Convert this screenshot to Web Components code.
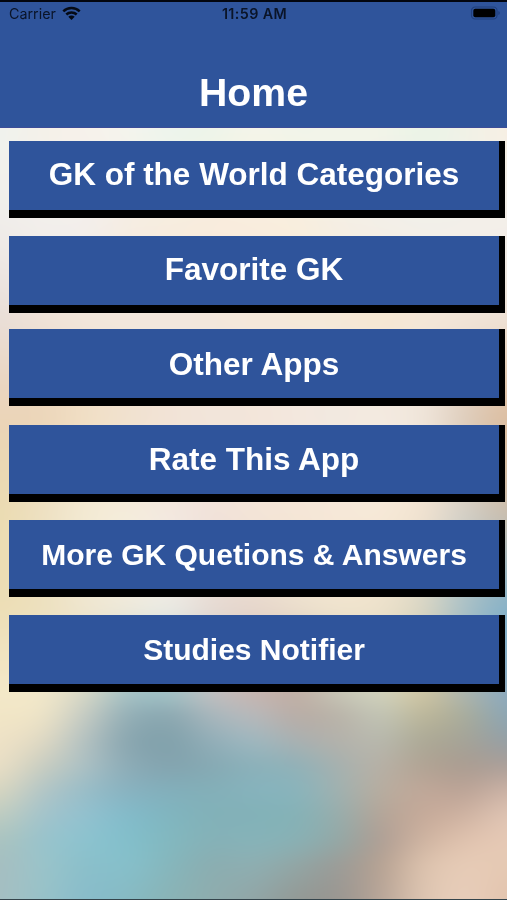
<!DOCTYPE html>
<html lang="en">
<head>
<meta charset="utf-8">
<meta name="viewport" content="width=device-width, initial-scale=1">
<title>Home</title>
<style>
  html, body { margin: 0; height: 100%; overflow: hidden; }
</style>
</head>
<body>

<home-screen>
  <status-bar slot="header" carrier="Carrier" time="11:59 AM"></status-bar>
  <title-bar slot="header">Home</title-bar>
  <menu-button style="--line: 67px">GK of the World Categories</menu-button>
  <menu-button style="--line: 67px">Favorite GK</menu-button>
  <menu-button style="--gap: 16px; --line: 71px">Other Apps</menu-button>
  <menu-button style="--gap: 19px">Rate This App</menu-button>
  <menu-button style="--size: 30px">More GK Quetions &amp; Answers</menu-button>
  <menu-button style="--size: 30px">Studies Notifier</menu-button>
</home-screen>

<script>
function html(a, ...b) { return a.map((s, i) => s + (b[i] ?? '')).join('') }

function makeTemplate(markup) {
  const template = document.createElement('template');
  template.innerHTML = markup;
  return template;
}

// backdrop colours: [y, colours evenly spaced from left to right]
const MESH = [
  [0,   'edf5ee f0f3e8 f5f5ee f4f5ee e8f5ee e9f5ea f0f5ea f0f5ea f2f5ea f2f4e8 e9f4e6 f0f2e6 f8efe3'],
  [134, 'f0f3ee f5f0e8 f8f1ea f4f5ee ecf5ee ecf5ea f5f5ea f0f5ea f2f5ea f2f4e8 e9f4e6 f0f2e6 f8efe3'],
  [226, 'f0edea f2f0ee f2efed f6ece1 f9ecdc fbebdb fbecdc faeedc f5eee4 f3efea f3f0ec f3f0ec f3f0ec'],
  [320, 'e8ddd8 f0e2d8 f2e6dc f3e8de f2e7df f2e7dc f5e8da f5e8d8 f6e8d5 f7e6cd f5e6d5 f3e5d8 efe3d8'],
  [415, 'ebd3b6 ebd2b4 f0dcbf f0dfcb f2e2d4 f2e5da f2e5da f2e8e0 f1e9e3 f2ebe4 efe6dd dccab8 dcb998'],
  [511, 'ebdcb0 eee2c4 f4ecd6 f5eedd f3e8e0 f2e2da f5e6d8 f6e6d6 f7e8d8 f8ead8 f5e4d0 d8d2c8 d0beaa'],
  [606, 'ecddb4 ecdfbc f0e6cf f4ecdc f2efe8 e8dcd4 e8d8cd eee3d0 f3e6cf efe2cb d8d6c5 a3bfc8 7db0cb'],
  [670, 'f3e6c4 f2e8ca e2dec8 b3ccca a4c6cb c4c4c4 ccb9b3 c6ada4 cccab8 d8d8c0 d4caa8 a8b8b8 84aac4'],
  [694, 'f3e8c8 f2e8ca d5d6c5 a3c0c4 9fc1c5 c0bfc0 c6b5b0 bfaea4 c5c4b5 d0d2bd cfc4a0 acb4ac 8ba9be'],
  [715, 'f2e6c6 eee4c7 c5cbc3 92aeb6 8aa7b0 a8b7bd b8b9bb b9aca5 b9b3a8 c2c5b6 bdb799 a9ac9b 8ba6b5'],
  [740, 'efe2c6 e0d9c3 b3c1c1 88a5af 80a0aa 92aeb8 9fb8c0 a9b0b1 b4b1aa b8b9ae aca995 a5a397 949fa6'],
  [765, 'eadfc5 c9cdc0 abc0c4 8cabb6 83a3ae 86a9b3 8bb1ba 90b1b8 a6b1af b8b1a6 b1a393 aa9c91 ab9f99'],
  [790, 'd8d6c0 b2c5c6 98bdc8 88b2c0 82afbb 83afb8 86b3bd 88b4bc a0b1b0 b8ad9f c0a798 bba396 ccb3a6'],
  [815, 'bfccc0 a2c3cb 92c1cf 82bbca 80b5bf 82b1b8 82b1b7 84b2b7 97adac b4a497 c6aa99 cfb3a2 e0c5b4'],
  [840, 'aac3bf 98c3cc 8cc3cf 82bfcb 82b8bf 85b1b7 86b3b9 88b1b5 93a8a6 ae9d93 cfb4a1 e0c3af e6c9b5'],
  [865, 'a6bec0 9ac4ca 8abfca 86c0cb 85b6bc 8badb0 8eafb2 92a6a5 9b9b97 b6a191 ddc3ae e7ccb7 e5c9b3'],
  [900, 'a5bfc2 98c2c8 88bccb 86bac3 8ab3b5 8fadae 92a5a6 939894 999590 b8a598 dec6b2 e8cebb e2c3ad'],
].map(([y, row]) => [y, row.split(' ').map(c => [0, 2, 4].map(i => parseInt(c.slice(i, i + 2), 16)))]);

const clamp = (n, max) => Math.max(0, Math.min(max, n));

// cubic weights for four neighbours, part b-spline and part catmull-rom
function weights(t) {
  const t2 = t * t, t3 = t2 * t;
  const spline = [(1 - t) ** 3 / 6, (3 * t3 - 6 * t2 + 4) / 6, (-3 * t3 + 3 * t2 + 3 * t + 1) / 6, t3 / 6];
  const catmull = [(-t3 + 2 * t2 - t) / 2, (3 * t3 - 5 * t2 + 2) / 2, (-3 * t3 + 4 * t2 + t) / 2, (t3 - t2) / 2];
  return spline.map((s, i) => s * 0.65 + catmull[i] * 0.35);
}

const backdropTemplate = makeTemplate(html`
  <style>
  :host { display: block; overflow: hidden; }
  canvas { display: block; width: 100%; height: 100%; }
  </style>
  <canvas width="507" height="900"></canvas>
`);

class SoftBackdrop extends HTMLElement {
  constructor() {
    super();
    const shadow = this.attachShadow({ mode: "open" });
    shadow.appendChild(backdropTemplate.content.cloneNode(true));
    this.paint(shadow.querySelector('canvas'));
  }

  paint(canvas) {
    const { width, height } = canvas;
    const ctx = canvas.getContext('2d');
    const image = ctx.createImageData(width, height);
    const lastRow = MESH.length - 1;
    const lastCol = MESH[0][1].length - 1;
    let r = 0;
    for (let y = 0; y < height; y++) {
      while (r < lastRow - 1 && y >= MESH[r + 1][0]) r++;
      const v = weights((y - MESH[r][0]) / (MESH[r + 1][0] - MESH[r][0]));
      const rows = [-1, 0, 1, 2].map(d => MESH[clamp(r + d, lastRow)][1]);
      // blend the rows first, then walk along the result
      const line = rows[0].map((_, c) => [0, 1, 2].map(k => rows.reduce((sum, row, i) => sum + row[c][k] * v[i], 0)));
      for (let x = 0; x < width; x++) {
        const pos = x / width * lastCol;
        const c = Math.floor(pos);
        const u = weights(pos - c);
        const at = (y * width + x) * 4;
        for (let k = 0; k < 3; k++) {
          let sum = 0;
          for (let i = 0; i < 4; i++) sum += line[clamp(c + i - 1, lastCol)][k] * u[i];
          image.data[at + k] = sum;
        }
        image.data[at + 3] = 255;
      }
    }
    ctx.putImageData(image, 0, 0);
  }
}
customElements.define("soft-backdrop", SoftBackdrop);

const screenTemplate = makeTemplate(html`
  <style>
  :host {
    display: grid;
    width: 507px;
    height: 900px;
    box-sizing: border-box;
    overflow: hidden;
    font-family: "Liberation Sans", Arial, sans-serif;
  }
  soft-backdrop, .page { grid-area: 1 / 1; min-height: 0; }
  .page { display: flex; flex-direction: column; z-index: 1; border-bottom: 1px solid #34444b; }
  header {
    height: 128px;
    box-sizing: border-box;
    border-top: 2px solid #03060f;
    border-bottom: 1px solid #3d4d98;
    background: #2f549b;
  }
  nav { display: flex; flex-direction: column; padding: 13px 2px 0 9px; }
  </style>
  <soft-backdrop></soft-backdrop>
  <div class="page">
    <header><slot name="header"></slot></header>
    <nav><slot></slot></nav>
  </div>
`);

class HomeScreen extends HTMLElement {
  constructor() {
    super();
    const shadow = this.attachShadow({ mode: "open" });
    shadow.appendChild(screenTemplate.content.cloneNode(true));
  }
}
customElements.define("home-screen", HomeScreen);

const statusTemplate = makeTemplate(html`
  <style>
  :host {
    display: grid;
    grid-template-columns: 1fr auto 1fr;
    align-items: center;
    height: 24px;
    padding: 0 7px 0 9px;
    font: 14.3px/24px Inter, "Liberation Sans", sans-serif;
    color: #0a1428;
  }
  .left { display: flex; align-items: center; gap: 6px; }
  .time { font-weight: 600; letter-spacing: 0.4px; }
  .battery { justify-self: end; }
  svg { display: block; position: relative; top: -1px; }
  </style>
  <div class="left">
    <span class="carrier"></span>
    <svg width="19" height="15" viewBox="0 0 19 15">
      <g fill="none" stroke="#050a14" stroke-width="2.5">
        <path d="M1.3 5.3C5.8 .9 13.2 .9 17.7 5.3"/>
        <path d="M4.3 8.5C7.2 5.7 11.8 5.7 14.7 8.5"/>
      </g>
      <path d="M6.3 10.7C8.1 9 10.9 9 12.7 10.7L9.5 14z" fill="#050a14"/>
    </svg>
  </div>
  <span class="time"></span>
  <svg class="battery" width="30" height="14" viewBox="0 0 30 14">
    <rect x="1.5" y="1" width="25.5" height="12" rx="3.6" fill="none" stroke="#203f7c" stroke-width="1.2"/>
    <rect x="3.3" y="2.7" width="22" height="8.6" rx="2" fill="#000"/>
    <path d="M28.4 5v4q1.4-.5 1.4-2t-1.4-2z" fill="#203f7c"/>
  </svg>
`);

class StatusBar extends HTMLElement {
  constructor() {
    super();
    const shadow = this.attachShadow({ mode: "open" });
    shadow.appendChild(statusTemplate.content.cloneNode(true));
  }

  connectedCallback() {
    this.shadowRoot.querySelector('.carrier').textContent = this.getAttribute('carrier');
    this.shadowRoot.querySelector('.time').textContent = this.getAttribute('time');
  }
}
customElements.define("status-bar", StatusBar);

const titleTemplate = makeTemplate(html`
  <style>
  :host { display: block; padding-top: 44px; text-align: center; color: #fff; }
  h1 { margin: 0; font-size: 39.2px; line-height: 46px; font-weight: bold; }
  </style>
  <h1><slot></slot></h1>
`);

class TitleBar extends HTMLElement {
  constructor() {
    super();
    const shadow = this.attachShadow({ mode: "open" });
    shadow.appendChild(titleTemplate.content.cloneNode(true));
  }
}
customElements.define("title-bar", TitleBar);

const buttonTemplate = makeTemplate(html`
  <style>
  :host { display: block; margin-top: var(--gap, 18px); }
  :host(:first-of-type) { margin-top: 0; }
  button {
    display: flex;
    justify-content: center;
    align-items: flex-start;
    width: 100%;
    height: 77px;
    padding: 0;
    border: solid #000;
    border-width: 0 6px 8px 0;
    border-radius: 0;
    background: #2f549b;
    color: #fff;
    font: bold var(--size, 31.5px)/var(--line, 69px) "Liberation Sans", Arial, sans-serif;
    white-space: nowrap;
  }
  </style>
  <button type="button"><slot></slot></button>
`);

class MenuButton extends HTMLElement {
  constructor() {
    super();
    const shadow = this.attachShadow({ mode: "open" });
    shadow.appendChild(buttonTemplate.content.cloneNode(true));
  }
}
customElements.define("menu-button", MenuButton);
</script>
</body>
</html>
